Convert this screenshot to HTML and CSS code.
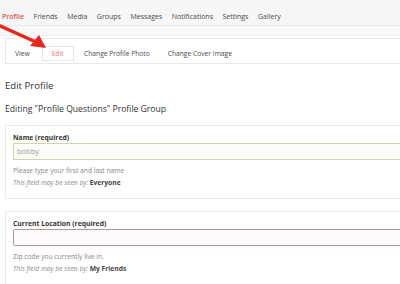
FILE: index.html
```html
<!DOCTYPE html>
<html lang="en">
<head>
    <meta charset="UTF-8">
    <title>Edit Profile</title>
    <link rel="stylesheet" href="styles.css">
</head>
<body>
    <div id="pageWrapper">
        <ul class="main-nav">
            <li class="current">Profile</li>
            <li>Friends</li>
            <li>Media</li>
            <li>Groups</li>
            <li>Messages</li>
            <li>Notifications</li>
            <li>Settings</li>
            <li>Gallery</li>
        </ul>
        <div class="nav-band"></div>

        <ul class="sub-nav">
            <li>View</li>
            <li class="current">Edit</li>
            <li>Change Profile Photo</li>
            <li>Change Cover Image</li>
        </ul>

        <h2 class="page-title">Edit Profile</h2>
        <h3 class="group-title">Editing "Profile Questions" Profile Group</h3>

        <div class="field-box">
            <label class="field-label">Name (required)</label>
            <div class="field-input ok">bobby</div>
            <p class="field-desc">Please type your first and last name</p>
            <p class="field-vis">This field may be seen by: <b>Everyone</b></p>
        </div>

        <div class="field-box">
            <label class="field-label">Current Location (required)</label>
            <div class="field-input error"></div>
            <p class="field-desc">Zip code you currently live in.</p>
            <p class="field-vis">This field may be seen by: <b>My Friends</b></p>
        </div>
    </div>

    <!-- the red arrow drawn on top of the screenshot -->
    <svg class="arrow" width="60" height="60" viewBox="0 0 60 60">
        <line x1="-2" y1="25" x2="36" y2="42" stroke="#e8261c" stroke-width="3.4"/>
        <polygon points="30,46 39,35 46,48" fill="#e8261c"/>
    </svg>
</body>
</html>
```

FILE: styles.css
```css
html, body {
    margin: 0;
    padding: 0;
    overflow: hidden;
    background-color: #fff;
}

body {
    font-family: "Open Sans", "Liberation Sans", sans-serif;
    color: #444;
    position: relative;
}

#pageWrapper {
    width: 440px;
}

ul {
    list-style: none;
    margin: 0;
    padding: 0;
}

.main-nav {
    display: flex;
    gap: 9.5px;
    height: 22px;
    align-items: flex-end;
    padding: 0 0 3px 2px;
    background-color: #f6f6f6;
    border-bottom: 1px solid #e6e6e6;
    font-size: 7px;
    line-height: 10px;
    color: #4a4a4a;
}

.main-nav .current {
    color: #d9534f;
    font-weight: 600;
}

.nav-band {
    height: 9px;
    background-color: #f8f8f8;
    border-bottom: 1px solid #efefef;
}

.sub-nav {
    display: flex;
    margin: 2px 0 0 5px;
    padding: 7px 0 2px;
    border: 1px solid #e8e8e8;
    font-size: 6.7px;
    line-height: 11px;
    color: #4a4a4a;
}

.sub-nav li {
    padding: 1px 8px;
    border: 1px solid transparent;
}

.sub-nav .current {
    margin: 0 1.5px 0 3px;
    padding: 1px 9px;
    color: #e57873;
    border-color: #e6e6e6;
}

.page-title,
.group-title {
    line-height: 13px;
    font-weight: 400;
    color: #333;
}

.page-title {
    font-size: 9.6px;
    margin: 15px 0 0 5px;
}

.group-title {
    font-size: 8.6px;
    margin: 11px 0 0 5px;
}

.field-box {
    margin: 9px 0 0 5px;
    padding: 8px 0 10px 7px;
    border: 1px solid #ebebeb;
}

.field-box + .field-box {
    margin-top: 12px;
}

.field-label {
    display: block;
    font-size: 6.8px;
    line-height: 8px;
    font-weight: 700;
    color: #333;
}

.field-input {
    margin-top: 1px;
    height: 15px;
    line-height: 15px;
    padding-left: 3px;
    font-size: 7.5px;
    color: #999;
    background-color: #fbfcf8;
}

.field-input.ok {
    border: 1px solid #cfd8a6;
}

.field-input.error {
    border: 1px solid #b29a95;
    border-radius: 2px;
    background-color: #fdfbfb;
}

.field-desc {
    margin: 6px 0 0;
    font-size: 6.7px;
    line-height: 10px;
    color: #888;
}

.field-vis {
    margin: 2px 0 0;
    font-size: 6.7px;
    line-height: 10px;
    font-style: italic;
    color: #888;
}

.field-vis b {
    font-style: normal;
    color: #444;
}

.arrow {
    position: absolute;
    top: 0;
    left: 0;
}
```
